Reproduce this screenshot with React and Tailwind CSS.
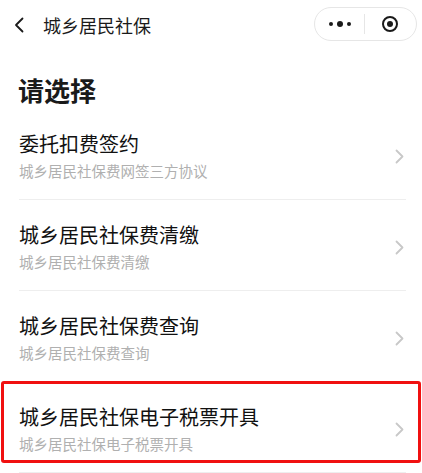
import React from 'react';

const items = [
  { title: '委托扣费签约', desc: '城乡居民社保费网签三方协议' },
  { title: '城乡居民社保费清缴', desc: '城乡居民社保费清缴' },
  { title: '城乡居民社保费查询', desc: '城乡居民社保费查询' },
  { title: '城乡居民社保电子税票开具', desc: '城乡居民社保电子税票开具' },
];

const Chevron = () => (
  <svg width="9" height="15" viewBox="0 0 9 15" fill="none">
    <polyline points="1.5,1.5 7.5,7.5 1.5,13.5" stroke="#c8c8c8" strokeWidth="1.8" strokeLinecap="round" strokeLinejoin="round" />
  </svg>
);

export default function App() {
  return (
    <div className="relative h-[473px] w-[422px] overflow-hidden bg-white text-[#1a1a1a] font-['Noto_Sans_CJK_SC','Noto_Sans',sans-serif]">
      {/* Nav bar */}
      <div className="flex h-[47px] items-center justify-between pl-[13px] pr-[5px]">
        <div className="flex items-center pt-[3px]">
          <svg width="12" height="16" viewBox="0 0 12 16" fill="none">
            <polyline points="9.5,1.5 3,8 9.5,14.5" stroke="#1a1a1a" strokeWidth="1.8" strokeLinecap="round" strokeLinejoin="round" />
          </svg>
          <span className="ml-[18px] text-[18px] leading-[24px]">城乡居民社保</span>
        </div>
        <div className="flex h-[34px] w-[103px] items-center rounded-full border border-[#e6e6e6] bg-white">
          <div className="flex h-full flex-1 items-center justify-center gap-[4px]">
            <span className="h-[4px] w-[4px] rounded-full bg-[#1a1a1a]" />
            <span className="h-[6px] w-[6px] rounded-full bg-[#1a1a1a]" />
            <span className="h-[4px] w-[4px] rounded-full bg-[#1a1a1a]" />
          </div>
          <div className="h-[20px] w-px bg-[#e6e6e6]" />
          <div className="flex h-full flex-1 items-center justify-center pr-[2px]">
            <svg width="18" height="18" viewBox="0 0 18 18" fill="none">
              <circle cx="9" cy="9" r="7" stroke="#1a1a1a" strokeWidth="2" />
              <circle cx="9" cy="9" r="3" fill="#1a1a1a" />
            </svg>
          </div>
        </div>
      </div>

      {/* Heading */}
      <h1 className="mt-[27px] pl-[18px] text-[26px] font-bold leading-[32px]">请选择</h1>

      {/* List */}
      <div className="mt-[3px] pl-[19px] pr-[16px]">
        {items.map((it) => (
          <div key={it.title} className="flex h-[91px] items-center justify-between border-b border-[#eeeeee] pt-[4px]">
            <div className="flex flex-col">
              <span className="text-[20px] leading-[24px] text-[#111111]">{it.title}</span>
              <span className="mt-[5px] text-[14.5px] leading-[20px] text-[#b0b0b0]">{it.desc}</span>
            </div>
            <div className="mr-[2px]">
              <Chevron />
            </div>
          </div>
        ))}
      </div>

      {/* Highlight annotation */}
      <div className="pointer-events-none absolute left-[1px] top-[381px] h-[82px] w-[420px] rounded-[3px] border-[3px] border-[#f01010]" />
    </div>
  );
}
